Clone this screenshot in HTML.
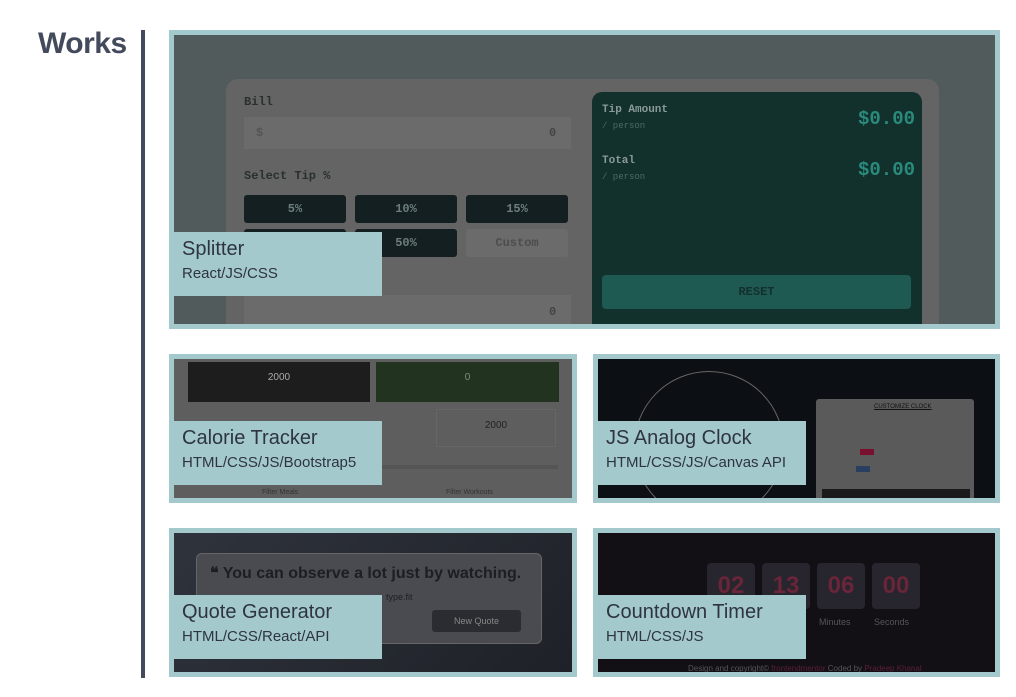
<!DOCTYPE html>
<html><head><meta charset="utf-8"><style>
*{margin:0;padding:0;box-sizing:border-box}
body{width:1016px;height:697px;background:#fff;position:relative;overflow:hidden;font-family:"Liberation Sans",sans-serif}
.h{position:absolute;left:38px;top:27px;font-size:30px;font-weight:bold;color:#434a5c;letter-spacing:-0.5px}
.vl{position:absolute;left:141px;top:30px;width:4px;height:648px;background:#434a5c}
.card{position:absolute;border:5px solid #a3c9cc;overflow:hidden}
.lab{position:absolute;left:0;background:#a3c9cc;width:208px;height:64px;padding:4px 8px;color:#2e3440}
.lab b{display:block;font-weight:normal;font-size:20px;line-height:26px}
.lab i{display:block;font-style:normal;font-size:15px;line-height:24px}
.m{font-family:"Liberation Mono",monospace;font-weight:bold}
.abs{position:absolute}
</style></head><body>
<div class="h">Works</div>
<div class="vl"></div>

<div class="card" style="left:169px;top:30px;width:831px;height:299px;background:#525b5c">
 <div class="abs" style="left:52px;top:44px;width:713px;height:260px;background:#646464;border-radius:12px"></div>
 <div class="abs m" style="left:70px;top:60px;font-size:12px;color:#2a2f2f">Bill</div>
 <div class="abs" style="left:70px;top:82px;width:327px;height:32px;background:#6b6b6b"></div>
 <div class="abs m" style="left:82px;top:91px;font-size:12px;color:#555">$</div>
 <div class="abs m" style="left:375px;top:91px;font-size:12px;color:#444">0</div>
 <div class="abs m" style="left:70px;top:134px;font-size:12px;color:#2a2f2f">Select Tip %</div>
 <div class="abs m" style="left:70px;top:160px;width:102px;height:28px;background:#131f20;border-radius:3px;color:#6d7d7c;font-size:12px;text-align:center;line-height:28px">5%</div>
 <div class="abs m" style="left:181px;top:160px;width:102px;height:28px;background:#131f20;border-radius:3px;color:#6d7d7c;font-size:12px;text-align:center;line-height:28px">10%</div>
 <div class="abs m" style="left:292px;top:160px;width:102px;height:28px;background:#131f20;border-radius:3px;color:#6d7d7c;font-size:12px;text-align:center;line-height:28px">15%</div>
 <div class="abs m" style="left:70px;top:194px;width:102px;height:28px;background:#131f20;border-radius:3px"></div>
 <div class="abs m" style="left:181px;top:194px;width:102px;height:28px;background:#131f20;border-radius:3px;color:#6d7d7c;font-size:12px;text-align:center;line-height:28px">50%</div>
 <div class="abs m" style="left:292px;top:194px;width:102px;height:28px;background:#6b6b6b;border-radius:3px;color:#4d4d4d;font-size:12px;text-align:center;line-height:28px">Custom</div>
 <div class="abs" style="left:70px;top:260px;width:327px;height:32px;background:#6b6b6b"></div>
 <div class="abs m" style="left:375px;top:270px;font-size:12px;color:#444">0</div>
 <div class="abs" style="left:418px;top:57px;width:330px;height:250px;background:#12302c;border-radius:10px"></div>
 <div class="abs m" style="left:428px;top:69px;font-size:11px;color:#8a9a98">Tip Amount</div>
 <div class="abs m" style="left:428px;top:86px;font-size:9px;color:#4f6a66;font-weight:normal">/ person</div>
 <div class="abs m" style="left:684px;top:73px;font-size:19px;color:#2a8a7c">$0.00</div>
 <div class="abs m" style="left:428px;top:120px;font-size:11px;color:#8a9a98">Total</div>
 <div class="abs m" style="left:428px;top:137px;font-size:9px;color:#4f6a66;font-weight:normal">/ person</div>
 <div class="abs m" style="left:684px;top:124px;font-size:19px;color:#2a8a7c">$0.00</div>
 <div class="abs m" style="left:428px;top:240px;width:309px;height:34px;background:#1f5a52;border-radius:4px;color:#12302c;font-size:12px;text-align:center;line-height:34px">RESET</div>
 <div class="lab" style="top:197px"><b>Splitter</b><i>React/JS/CSS</i></div>
</div>

<div class="card" style="left:169px;top:354px;width:408px;height:149px;background:#5e5e5e">
 <div class="abs" style="left:14px;top:3px;width:182px;height:40px;background:#1d1d1d;color:#aaa;font-size:10px;text-align:center;padding-top:10px">2000</div>
 <div class="abs" style="left:202px;top:3px;width:183px;height:40px;background:#22341f;color:#888;font-size:10px;text-align:center;padding-top:10px">0</div>
 <div class="abs" style="left:262px;top:50px;width:120px;height:38px;border:1px solid #666;color:#222;font-size:10px;text-align:center;padding-top:10px">2000</div>
 <div class="abs" style="left:200px;top:106px;width:184px;height:4px;background:#555"></div>
 <div class="abs" style="left:88px;top:130px;font-size:7px;color:#333">Filter Meals</div>
 <div class="abs" style="left:272px;top:130px;font-size:7px;color:#333">Filter Workouts</div>
 <div class="lab" style="top:62px"><b>Calorie Tracker</b><i>HTML/CSS/JS/Bootstrap5</i></div>
</div>

<div class="card" style="left:593px;top:354px;width:407px;height:149px;background:#0c0f13">
 <div class="abs" style="left:36px;top:12px;width:150px;height:150px;border:1px solid #666;border-radius:50%"></div>
 <div class="abs" style="left:218px;top:40px;width:158px;height:110px;background:#5a5a5a;border-radius:3px"></div>
 <div class="abs" style="left:276px;top:45px;font-size:6px;color:#111;text-decoration:underline">CUSTOMIZE CLOCK</div>
 <div class="abs" style="left:224px;top:130px;width:148px;height:10px;background:#1a1a1a"></div>
 <div class="abs" style="left:262px;top:90px;width:14px;height:6px;background:#7a1030"></div>
 <div class="abs" style="left:258px;top:107px;width:14px;height:6px;background:#2a3f60"></div>
 <div class="lab" style="top:62px"><b>JS Analog Clock</b><i>HTML/CSS/JS/Canvas API</i></div>
</div>

<div class="card" style="left:169px;top:528px;width:408px;height:149px;background:linear-gradient(135deg,#2f333c,#1e2127)">
 <div class="abs" style="left:22px;top:20px;width:346px;height:91px;background:#494b50;border:1px solid #666;border-radius:6px"></div>
 <div class="abs" style="left:36px;top:30px;font-size:16px;font-weight:bold;color:#1c1e24">❝ You can observe a lot just by watching.</div>
 <div class="abs" style="left:212px;top:59px;font-size:9px;color:#1c1e24">type.fit</div>
 <div class="abs" style="left:258px;top:77px;width:89px;height:22px;background:#2b2c32;border-radius:3px;color:#888;font-size:9px;text-align:center;line-height:22px">New Quote</div>
 <div class="lab" style="top:62px"><b>Quote Generator</b><i>HTML/CSS/React/API</i></div>
</div>

<div class="card" style="left:593px;top:528px;width:407px;height:149px;background:#121015">
 <div class="abs" style="left:109px;top:30px;width:48px;height:46px;background:#27252e;border-radius:4px;color:#6a2539;font-size:24px;font-weight:bold;text-align:center;line-height:46px">02</div>
 <div class="abs" style="left:164px;top:30px;width:48px;height:46px;background:#27252e;border-radius:4px;color:#6a2539;font-size:24px;font-weight:bold;text-align:center;line-height:46px">13</div>
 <div class="abs" style="left:219px;top:30px;width:48px;height:46px;background:#27252e;border-radius:4px;color:#6a2539;font-size:24px;font-weight:bold;text-align:center;line-height:46px">06</div>
 <div class="abs" style="left:274px;top:30px;width:48px;height:46px;background:#27252e;border-radius:4px;color:#6a2539;font-size:24px;font-weight:bold;text-align:center;line-height:46px">00</div>
 <div class="abs" style="left:221px;top:84px;font-size:9px;color:#555">Minutes</div>
 <div class="abs" style="left:276px;top:84px;font-size:9px;color:#555">Seconds</div>
 <div class="abs" style="left:90px;top:131px;font-size:8px;color:#555">Design and copyright© <span style="color:#5a2030">frontendmentor</span> Coded by <span style="color:#5a2030">Pradeep Khanal</span></div>
 <div class="lab" style="top:62px"><b>Countdown Timer</b><i>HTML/CSS/JS</i></div>
</div>
</body></html>
